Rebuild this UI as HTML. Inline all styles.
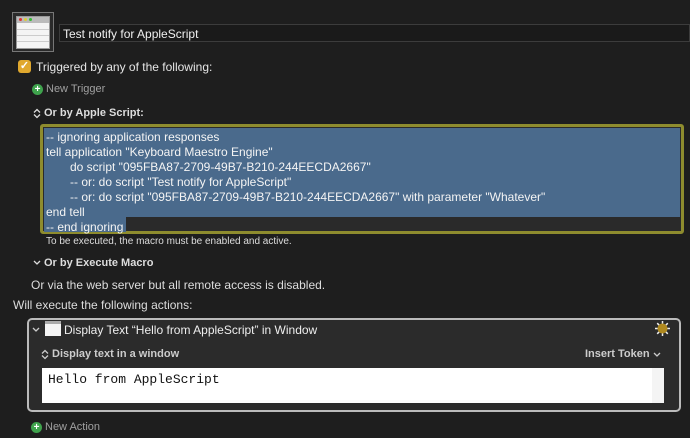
<!DOCTYPE html>
<html><head><meta charset="utf-8"><style>
*{margin:0;padding:0;box-sizing:border-box}
body{width:690px;height:438px;background:#1e1e1e;font-family:"Liberation Sans",sans-serif;color:#e6e6e6;position:relative;overflow:hidden;font-size:12px}
.a{position:absolute;white-space:nowrap}
.plus{position:absolute;width:11px;height:11px;border-radius:50%;background:#3fa34d;color:#fff;font-size:10px;line-height:11px;text-align:center;font-weight:bold}
</style></head><body>
<div class="a" style="left:12px;top:12px;width:42px;height:40px;border:1px solid #777;background:#2a2a2a"></div>
<div class="a" style="left:16px;top:16px;width:34px;height:33px;background:#f4f4f4;border:1px solid #999">
 <div style="height:6px;background:#bbb;position:relative">
  <span style="position:absolute;left:2px;top:1px;width:3px;height:3px;border-radius:50%;background:#d33"></span>
  <span style="position:absolute;left:7px;top:1px;width:3px;height:3px;border-radius:50%;background:#dc3"></span>
  <span style="position:absolute;left:12px;top:1px;width:3px;height:3px;border-radius:50%;background:#3b3"></span></div>
 <div style="margin-top:6px;border-top:1px solid #ccc;height:6px"></div>
 <div style="border-top:1px solid #ccc;height:6px"></div>
 <div style="border-top:1px solid #ccc"></div>
</div>
<div class="a" style="left:59px;top:24px;width:631px;height:18px;border:1px solid #3c3c3c;background:#1a1a1a;padding:2px 3px;font-size:12px;color:#f0f0f0">Test notify for AppleScript</div>
<div class="a" style="left:18px;top:60px;width:13px;height:13px;border-radius:3px;background:#e0a82e;color:#fff;font-size:11px;line-height:13px;text-align:center;font-weight:bold">✓</div>
<div class="a" style="left:36px;top:60px;font-size:12px">Triggered by any of the following:</div>
<div class="plus" style="left:32px;top:84px">+</div>
<div class="a" style="left:46px;top:83px;font-size:11px;color:#a0a0a0">New Trigger</div>
<svg class="a" style="left:33px;top:108px" width="8" height="11"><path d="M1 4.5L4 1.5L7 4.5M1 6.5L4 9.5L7 6.5" fill="none" stroke="#ddd" stroke-width="1.3"/></svg>
<div class="a" style="left:44px;top:107px;font-size:11px;font-weight:bold;color:#ddd">Or by Apple Script:</div>
<div class="a" style="left:40px;top:124px;width:644px;height:110px;border:3px solid #8e8c2e;border-radius:3px;background:#2a2a2a"></div>
<div class="a" style="left:44px;top:128px;width:636px;height:89px;background:#4a6a8c"></div>
<div class="a" style="left:44px;top:217px;width:82px;height:15px;background:#4a6a8c"></div>
<div class="a" style="left:46px;top:130px;font-size:12px;line-height:15px;color:#f4f4f4">-- ignoring application responses<br>tell application "Keyboard Maestro Engine"<br><span style="padding-left:24px">do script "095FBA87-2709-49B7-B210-244EECDA2667"</span><br><span style="padding-left:24px">-- or: do script "Test notify for AppleScript"</span><br><span style="padding-left:24px">-- or: do script "095FBA87-2709-49B7-B210-244EECDA2667" with parameter "Whatever"</span><br>end tell<br>-- end ignoring</div>
<div class="a" style="left:46px;top:236px;font-size:10px;color:#ddd">To be executed, the macro must be enabled and active.</div>
<svg class="a" style="left:33px;top:260px" width="8" height="6"><path d="M1 1L4 4L7 1" fill="none" stroke="#ddd" stroke-width="1.3"/></svg>
<div class="a" style="left:44px;top:257px;font-size:11px;font-weight:bold;color:#ddd">Or by Execute Macro</div>
<div class="a" style="left:31px;top:278px;font-size:12px;color:#ddd">Or via the web server but all remote access is disabled.</div>
<div class="a" style="left:13px;top:298px;font-size:12px;color:#ddd">Will execute the following actions:</div>
<div class="a" style="left:27px;top:318px;width:654px;height:94px;border:2px solid #bbb;border-radius:5px;background:#2b2b2b"></div>
<svg class="a" style="left:32px;top:327px" width="8" height="6"><path d="M1 1L4 4L7 1" fill="none" stroke="#ccc" stroke-width="1.3"/></svg>
<div class="a" style="left:45px;top:321px;width:16px;height:15px;background:#f4f4f4;border-top:3px solid #aaa"></div>
<div class="a" style="left:64px;top:323px;font-size:12px;color:#eee">Display Text “Hello from AppleScript” in Window</div>
<svg class="a" style="left:654px;top:320px" width="17" height="17"><g stroke="#eee" stroke-width="1.5"><path d="M8.5 1V16M1 8.5H16M3.2 3.2L13.8 13.8M13.8 3.2L3.2 13.8"/></g><circle cx="8.5" cy="8.5" r="5" fill="#b08a20"/></svg>
<svg class="a" style="left:41px;top:349px" width="8" height="11"><path d="M1 4.5L4 1.5L7 4.5M1 6.5L4 9.5L7 6.5" fill="none" stroke="#ccc" stroke-width="1.3"/></svg>
<div class="a" style="left:52px;top:348px;font-size:11px;font-weight:bold;color:#ccc">Display text in a window</div>
<div class="a" style="left:585px;top:348px;font-size:11px;font-weight:bold;color:#ccc">Insert Token</div>
<svg class="a" style="left:653px;top:352px" width="8" height="6"><path d="M1 1L4 4L7 1" fill="none" stroke="#ccc" stroke-width="1.3"/></svg>
<div class="a" style="left:42px;top:368px;width:622px;height:35px;background:#fff;border-right:12px solid #f4f4f4"></div>
<div class="a" style="left:48px;top:372px;font-family:'Liberation Mono',monospace;font-size:13px;color:#111">Hello from AppleScript</div>
<div class="plus" style="left:31px;top:422px">+</div>
<div class="a" style="left:45px;top:421px;font-size:11px;color:#a0a0a0">New Action</div>
</body></html>
